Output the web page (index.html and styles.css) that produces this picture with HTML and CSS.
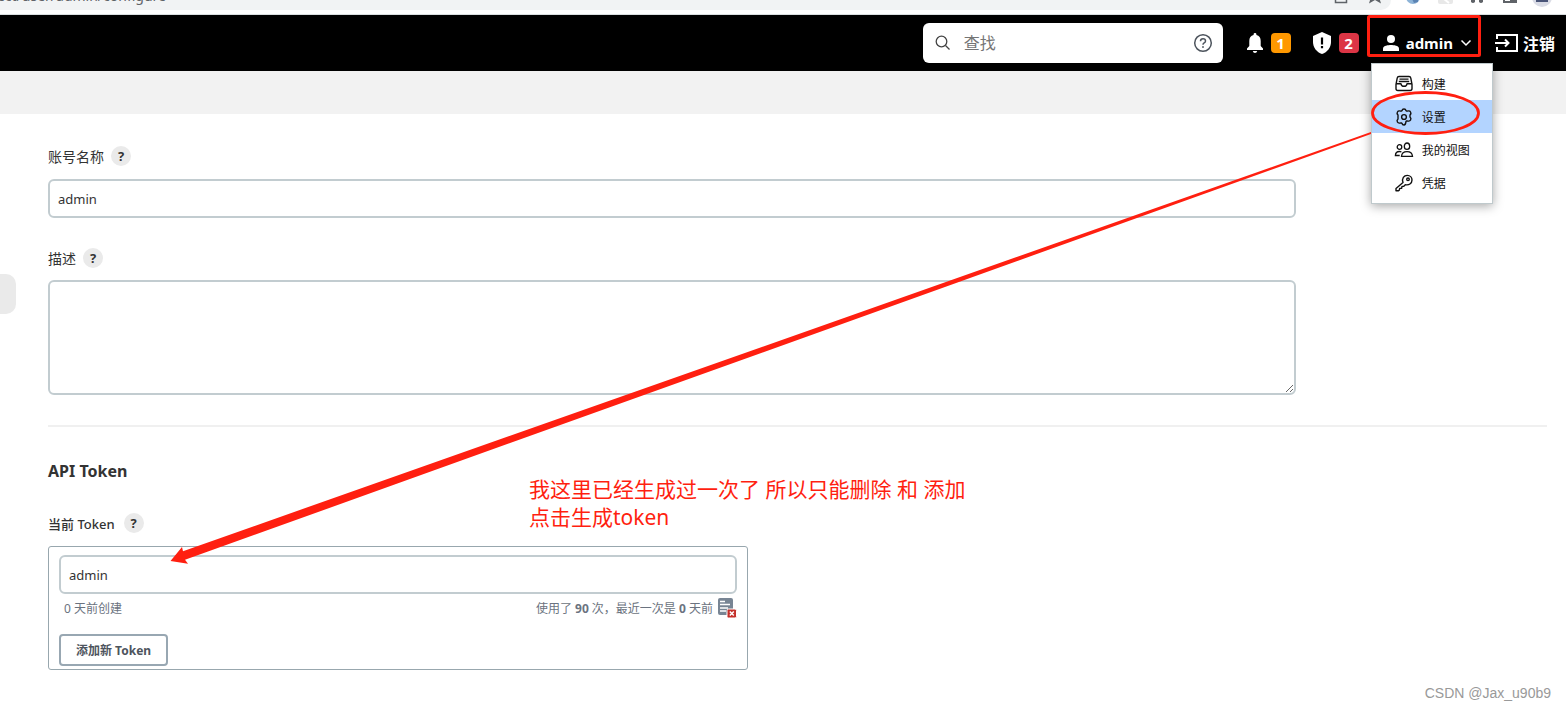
FILE: index.html
```html
<!DOCTYPE html>
<html lang="zh-CN">
<head>
<meta charset="utf-8">
<title>admin - 设置</title>
<link rel="stylesheet" href="styles.css">
</head>
<body>
<div class="browser-bar">
  <div class="omnibox">
    <span class="omnibox-url">ect/user/admin/configure</span>
    <svg class="omnibox-icons" width="60" height="10" viewBox="0 0 60 10" fill="none" stroke="#5f6368" stroke-width="1.5"><path d="M4.500 -3v5.500h11v-4"/><path fill="#5f6368" stroke="none" d="M38 3.500l1.500-5h9l1.500 5-6-3.500z"/></svg>
  </div>
  <svg class="extensions" width="175" height="12" viewBox="0 0 175 12"><circle cx="22" cy="-3" r="7" fill="#8db4d8"/><path d="M20-3h7v5l-4 1z" fill="#5b83b3"/><rect x="47" y="-8" width="15" height="12" rx="2" fill="#e8e8e8"/><path d="M53-1l5 4" stroke="#fff" stroke-width="2"/><path d="M80-4h12v6q-2 2-4 0v-2h-4v2q-2 2-4 0z" fill="#5f6368"/><path d="M113-5h12v7h-12z" fill="#fff" stroke="#5f6368" stroke-width="2"/><path d="M119-4h5v5h-5z" fill="#5f6368"/><circle cx="151" cy="-3" r="10" fill="#dadce6"/><path d="M145-3h12v5h-12z" fill="#4a5578"/></svg>
</div>
<header class="page-header">
  <label class="search">
    <svg width="16" height="16" viewBox="0 0 16 16" fill="none" stroke="#444" stroke-width="1.300"><circle cx="6.500" cy="6.500" r="5.300"/><path d="M10.500 10.500l4 4"/></svg>
    <input class="search-input" type="text" placeholder="查找" aria-label="查找">
    <svg width="20" height="20" viewBox="0 0 20 20" fill="none" stroke="#4d545d" stroke-width="1.500"><circle cx="10" cy="10" r="8.300"/><path d="M7.500 8.200q0-2.400 2.500-2.400t2.500 2.200q0 1.200-1.300 1.900-1.200.7-1.200 1.800" /><circle cx="10" cy="14" r=".6" fill="#4d545d" stroke-width=".8"/></svg>
  </label>
  <a class="monitor" href="#" aria-label="通知">
    <svg width="18" height="20" viewBox="0 0 18 20" fill="#fff"><path d="M9 0a1.400 1.400 0 0 1 1.400 1.500v.6C13.300 2.700 14.700 5 14.700 8v5l2.300 2.400V17H1v-1.600L3.300 13V8c0-3 1.400-5.300 4.300-5.900v-.6A1.400 1.400 0 0 1 9 0zM6.800 18h4.400q-.4 2-2.200 2t-2.200-2z"/></svg>
    <span class="badge badge-orange">1</span>
  </a>
  <a class="monitor monitor-security" href="#" aria-label="安全警告">
    <svg width="20" height="22" viewBox="0 0 20 22"><path d="M10 0l9 4v6c0 5.500-3.700 10.200-9 12-5.300-1.800-9-6.500-9-12V4z" fill="#fff"/><path d="M8.900 5.500h2.200v7H8.900zM8.900 14h2.200v2.200H8.900z" fill="#000"/></svg>
    <span class="badge badge-red">2</span>
  </a>
  <div class="user">
    <button class="user-button" type="button">
      <svg width="16" height="16" viewBox="0 0 16 16" fill="#fff"><circle cx="8" cy="4" r="4"/><path d="M0 16v-2.500C0 10.500 5.500 10 8 10s8 .5 8 3.500V16z"/></svg>
      <span>admin</span>
      <svg width="12" height="8" viewBox="0 0 12 8" fill="none" stroke="#fff" stroke-width="1.500"><path d="M1.500 1.500L6 6l4.500-4.500"/></svg>
    </button>
    <nav class="menu">
      <a class="menu-item" href="#"><svg width="20" height="18" viewBox="0 0 20 18" fill="none" stroke="#111" stroke-width="1.400" stroke-linejoin="round"><path d="M2 9.500L3.200 3.200Q3.500 1.500 5 1.500h10q1.500 0 1.800 1.700L18 9.500v4q0 2-2 2H4q-2 0-2-2zM2 8.800h5q.3 2.500 3 2.500t3-2.500h5M5.500 4.100h9M4.800 6.500h10.400"/></svg>构建</a>
      <a class="menu-item menu-item-selected" href="#"><svg width="20" height="18" viewBox="0 0 20 18" fill="none" stroke="#111" stroke-width="1.400" stroke-linejoin="round"><path d="M8 2.600Q8.300 1 10 1t2 1.600l1 .6q2.700-.9 3.600.8.900 1.600-.6 3v2q1.500 1.400.6 3-.9 1.700-3.600.8l-1 .6Q11.700 17 10 17t-2-1.600l-1-.6q-2.700.9-3.600-.8-.9-1.600.6-3V7q-1.500-1.400-.6-3 .9-1.700 3.600-.8z"/><circle cx="10" cy="9" r="2.400"/></svg>设置</a>
      <a class="menu-item" href="#"><svg width="20" height="18" viewBox="0 0 20 18" fill="none" stroke="#111" stroke-width="1.300"><ellipse cx="13" cy="5.200" rx="2.700" ry="3.200"/><circle cx="5.500" cy="6" r="2.300"/><path d="M7.500 15.300c.3-3.500 2.500-4.700 5.500-4.700s5.200 1.200 5.500 4.700zM5.700 14.500H1.400c.1-2.700 1.600-4 4-4q1 0 2 .4"/></svg>我的视图</a>
      <a class="menu-item" href="#"><svg width="20" height="18" viewBox="0 0 20 18" fill="none" stroke="#111" stroke-width="1.400" stroke-linejoin="round"><path d="M9 8.500C7.500 4.500 10 1.400 13.300 1.400c2.700 0 4.700 2 4.700 4.600 0 3.500-3.200 5.500-6.700 4.700l-1.500 1.500-1.800.2-.3 1.800-2 .2-.4 1.800-1 .6H2v-2.300z"/><circle cx="14" cy="5.300" r="1.300"/></svg>凭据</a>
    </nav>
  </div>
  <a class="logout" href="#">
    <svg width="24" height="20" viewBox="0 0 24 20" fill="none" stroke="#fff" stroke-width="2"><path d="M2 6V2h20v16H2v-4M0 10h13M10 6.500L13.500 10 10 13.500"/></svg>注销
  </a>
</header>
<div class="breadcrumbs"></div>
<main class="content">
  <span class="side-handle"></span>
  <form class="form">
    <div class="label-row"><label for="full-name">账号名称</label><button class="help" type="button">?</button></div>
    <input class="field" id="full-name" type="text" value="admin">
    <div class="label-row label-row-next"><label for="description">描述</label><button class="help" type="button">?</button></div>
    <textarea class="field field-area" id="description"></textarea>
    <hr class="divider">
    <h2 class="section-title">API Token</h2>
    <div class="label-row label-row-token"><label for="token-name">当前 Token</label><button class="help" type="button">?</button></div>
    <div class="token-box">
      <input class="field field-token" id="token-name" type="text" value="admin">
      <div class="token-meta">
        <span>0 天前创建</span>
        <span class="token-usage">使用了 <b>90</b> 次，最近一次是 <b>0</b> 天前</span>
        <button class="revoke" type="button" aria-label="撤销">
          <svg width="20" height="20" viewBox="0 0 20 20"><rect x="1" y="0" width="15" height="17" rx="2" fill="#788594"/><path d="M3 3.500h5M3 6.500h10M3 10h8M3 13h6" stroke="#fff" stroke-width="1.300"/><rect x="10" y="11" width="9.500" height="9" rx="1.500" fill="#c4302b" stroke="#fff"/><path d="M12.800 13.500l4 4m0-4l-4 4" stroke="#fff" stroke-width="1.500"/></svg>
        </button>
      </div>
      <button class="add-token" type="button">添加新 Token</button>
    </div>
  </form>
</main>
<svg class="marks" width="1566" height="709" viewBox="0 0 1566 709" fill="none" stroke="#ff1f10"><rect x="1368.500" y="16.500" width="111" height="39" rx="1" stroke-width="3"/><ellipse cx="1425.500" cy="113" rx="53" ry="20.500" stroke-width="2.800"/><path fill="#ff1f10" stroke="none" d="M1371 132L183 551.200L182 547L170.500 561L188 563.800L185 559.800L1371 134z"/></svg>
<p class="note">我这里已经生成过一次了 所以只能删除 和 添加<br>点击生成token</p>
<p class="watermark">CSDN @Jax_u90b9</p>
</body>
</html>
```
FILE: styles.css
```css
* { box-sizing: border-box; }
body {
  position: relative;
  margin: 0;
  min-height: 100vh;
  overflow: hidden;
  background: #fff;
  color: #333;
  font-family: "Noto Sans", "Noto Sans CJK SC", sans-serif;
  font-size: 13px;
}
button, input, textarea { font: inherit; color: inherit; }
svg { flex: none; }
a { color: inherit; text-decoration: none; }
.browser-bar {
  display: flex;
  height: 15px;
  overflow: hidden;
  border-bottom: 1px solid #dadfe0;
}
.omnibox {
  display: flex;
  flex: 1;
  justify-content: space-between;
  height: 10px;
  background: #f1f3f4;
  border-bottom-right-radius: 10px;
}
.omnibox-url {
  display: flex;
  justify-content: flex-end;
  width: 166px;
  margin-top: -14px;
  line-height: 20px;
  font-size: 14px;
  color: #5f6368;
}
.page-header {
  display: flex;
  align-items: center;
  justify-content: flex-end;
  height: 56px;
  padding-right: 11px;
  background: #000;
  color: #fff;
}
.search {
  display: flex;
  align-items: center;
  width: 300px;
  height: 40px;
  margin-right: 23px;
  padding: 0 10px 0 12px;
  background: #fff;
  border-radius: 6px;
}
.search-input {
  flex: 1;
  min-width: 0;
  margin-left: 13px;
  padding: 0;
  border: 0;
  outline: 0;
  background: none;
  font-size: 16px;
}
.search-input::placeholder { color: #757575; }
.monitor { display: flex; align-items: center; gap: 7px; }
.monitor-security { margin-left: 21px; }
.badge {
  width: 20px;
  border-radius: 4px;
  line-height: 20px;
  text-align: center;
  font-size: 15px;
  font-weight: 700;
}
.badge-orange { background: #ff9800; }
.badge-red { background: #dc3545; }
.user { position: relative; margin-left: 24px; }
.user-button {
  display: flex;
  align-items: center;
  gap: 7px;
  padding: 0;
  border: 0;
  background: none;
  color: #fff;
  font-size: 15px;
  font-weight: 700;
}
.menu {
  position: absolute;
  top: 30px;
  left: -12px;
  width: 122px;
  padding: 3px 0 4px;
  background: #fff;
  border: 1px solid #bfc9cc;
  box-shadow: 0 2px 10px rgba(0, 0, 0, .35);
  color: #111;
  font-size: 12px;
}
.menu-item {
  display: flex;
  align-items: center;
  gap: 8px;
  height: 33px;
  padding-left: 22px;
}
.menu-item-selected { background: #b3d4ff; }
.logout {
  display: flex;
  align-items: center;
  gap: 4px;
  margin-left: 23px;
  font-size: 16px;
  font-weight: 700;
}
.breadcrumbs { height: 43px; background: #f2f2f2; }
.content { position: relative; padding: 32px 19px 39px 48px; }
.side-handle {
  position: absolute;
  left: 0;
  top: 160px;
  width: 16px;
  height: 40px;
  background: #eaeaea;
  border-radius: 0 10px 10px 0;
}
.label-row {
  display: flex;
  align-items: center;
  gap: 7px;
  height: 20px;
  margin-bottom: 13px;
  font-size: 14px;
}
.label-row-next { margin-top: 30px; margin-bottom: 12px; }
.label-row-token { font-size: 13px; font-weight: 500; gap: 9px; }
.help {
  width: 20px;
  height: 20px;
  padding: 0;
  border: 0;
  border-radius: 50%;
  background: #eaeaea;
  line-height: 20px;
  font-size: 13px;
  font-weight: 700;
}
.field {
  display: block;
  width: 83.25%;
  height: 39px;
  padding: 0 8px;
  border: 2px solid #c2ccd0;
  border-radius: 6px;
  outline: 0;
  background: #fff;
}
.field-area { height: 115px; resize: vertical; }
.field-token { width: 100%; }
.divider { height: 2px; margin: 30px 0; border: 0; background: #f0f0f0; }
.section-title { margin: 0 0 28px; line-height: 28px; font-size: 16px; font-weight: 700; }
.token-box {
  width: 700px;
  max-width: 100%;
  padding: 8px 10px 3px;
  border: 1px solid #98a7ae;
  border-radius: 3px;
}
.token-meta {
  display: flex;
  align-items: center;
  height: 28px;
  margin-bottom: 12px;
  padding-left: 5px;
  color: #6b7380;
  font-size: 12px;
}
.token-usage { margin-left: auto; }
.revoke { display: flex; margin-left: 4px; padding: 0; border: 0; background: none; }
.add-token {
  display: block;
  height: 32px;
  padding: 0 15px;
  border: 2px solid #98a7b2;
  border-radius: 4px;
  background: #fff;
  color: #4d545d;
  font-size: 12px;
  font-weight: 700;
}
.marks { position: absolute; left: 0; top: 0; pointer-events: none; }
.note {
  position: absolute;
  left: 529px;
  top: 475px;
  margin: 0;
  color: #ff1f10;
  line-height: 28px;
  font-size: 21px;
}
.watermark {
  position: absolute;
  right: 15px;
  bottom: 8px;
  margin: 0;
  color: #999;
  font-family: "Liberation Sans", sans-serif;
  font-size: 14px;
}
```
